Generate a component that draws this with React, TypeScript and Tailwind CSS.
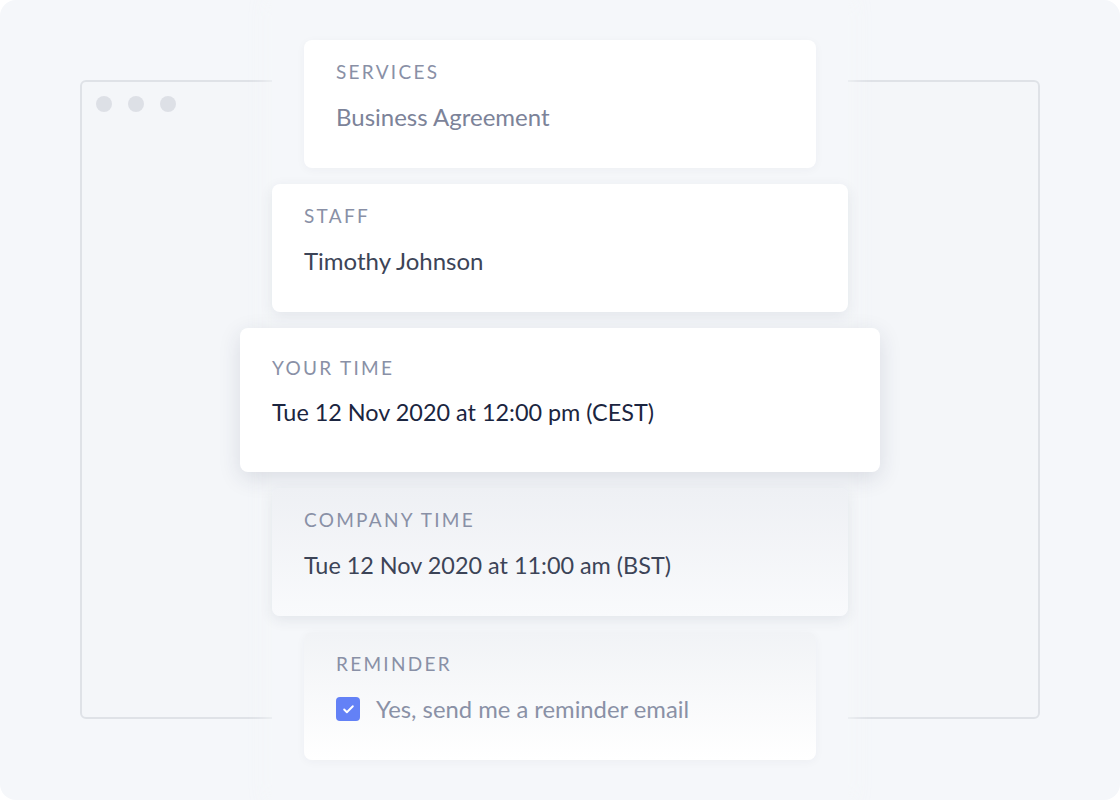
import { Check } from "lucide-react";

const font = { fontFamily: "Lato, 'Noto Sans', sans-serif" };

function Label({ children }: { children: string }) {
  return (
    <span className="block text-[19px] leading-[30px] tracking-[0.12em] uppercase text-[#8990a6]">
      {children}
    </span>
  );
}

export default function App() {
  return (
    <div className="w-[1120px] h-[800px] bg-white" style={font}>
      <div className="grid w-full h-full rounded-[16px] bg-[#f5f7fa] overflow-hidden">
        {/* browser frame */}
        <div className="col-start-1 row-start-1 self-start justify-self-start mt-[80px] ml-[80px] w-[960px] h-[639px] rounded-[6px] border-2 border-[#dfe2e7] bg-[#f4f6f9]">
          <div className="flex gap-4 pt-[14px] pl-[14px]">
            <span className="w-4 h-4 rounded-full bg-[#dde0e6]" />
            <span className="w-4 h-4 rounded-full bg-[#dde0e6]" />
            <span className="w-4 h-4 rounded-full bg-[#dde0e6]" />
          </div>
        </div>

        {/* stacked cards */}
        <div className="col-start-1 row-start-1 justify-self-center w-[576px] h-full bg-[#f5f7fa] shadow-[0_0_20px_4px_rgba(245,247,250,0.9)] flex flex-col items-center gap-4 pt-[40px]">
          <div className="w-[512px] h-[128px] shrink-0 rounded-[8px] bg-white shadow-[0_2px_10px_rgba(40,50,80,0.04)] px-8 pt-[17px]">
            <Label>Services</Label>
            <p className="mt-[14px] text-[24px] leading-[32px] text-[#7c8399]">
              Business Agreement
            </p>
          </div>

          <div className="w-[576px] h-[128px] shrink-0 rounded-[8px] bg-white shadow-[0_4px_14px_rgba(40,50,80,0.09)] px-8 pt-[17px]">
            <Label>Staff</Label>
            <p className="mt-[14px] text-[24px] leading-[32px] text-[#3c4457]">
              Timothy Johnson
            </p>
          </div>

          <div className="w-[640px] h-[144px] shrink-0 rounded-[8px] bg-white shadow-[0_6px_22px_rgba(40,50,80,0.13)] px-8 pt-[25px]">
            <Label>Your Time</Label>
            <p className="mt-[13px] text-[23.4px] leading-[32px] text-[#1b2540]">
              Tue 12 Nov 2020 at 12:00 pm (CEST)
            </p>
          </div>

          <div className="w-[576px] h-[128px] shrink-0 rounded-[8px] bg-gradient-to-b from-[#eef0f4] to-[#f9fafc] shadow-[0_4px_14px_rgba(40,50,80,0.09)] px-8 pt-[17px]">
            <Label>Company Time</Label>
            <p className="mt-[14px] text-[23.4px] leading-[32px] text-[#3c4457]">
              Tue 12 Nov 2020 at 11:00 am (BST)
            </p>
          </div>

          <div className="w-[512px] h-[128px] shrink-0 rounded-[8px] bg-gradient-to-b from-[#f1f3f6] to-white shadow-[0_2px_10px_rgba(40,50,80,0.04)] px-8 pt-[17px]">
            <Label>Reminder</Label>
            <div className="mt-[14px] flex items-center gap-4">
              <span className="w-6 h-6 rounded-[4px] bg-[#6381f6] flex items-center justify-center">
                <Check size={13} strokeWidth={3.5} color="white" />
              </span>
              <span className="text-[23.8px] leading-[32px] text-[#8a91a6]">
                Yes, send me a reminder email
              </span>
            </div>
          </div>
        </div>
      </div>
    </div>
  );
}
